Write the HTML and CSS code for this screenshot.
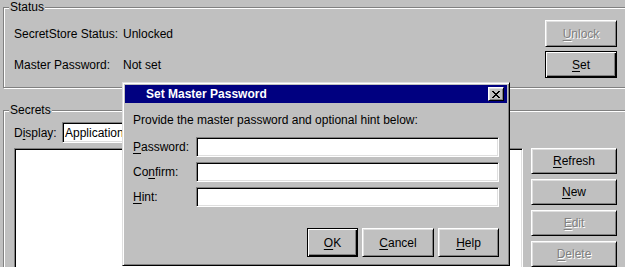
FILE: index.html
```html
<!DOCTYPE html>
<html lang="en">
  <head>
    <meta charset="UTF-8" />
    <meta name="viewport" content="width=device-width, initial-scale=1.0" />
    <link rel="stylesheet" href="styles.css">
  </head>
  <body>
    <div class="window">
      <fieldset class="group status">
        <legend>Status</legend>
        <div class="status-grid">
          <span>SecretStore Status:</span>
          <span>Unlocked</span>
          <button class="btn" disabled><u>U</u>nlock</button>
          <span>Master Password:</span>
          <span>Not set</span>
          <button class="btn default"><u>S</u>et</button>
        </div>
      </fieldset>
      <fieldset class="group secrets">
        <legend>Secrets</legend>
        <div class="secrets-grid">
          <div class="display-row">
            <span>D<u>i</u>splay:</span>
            <div class="combo">Application</div>
          </div>
          <div class="list"></div>
          <div class="side-buttons">
            <button class="btn"><u>R</u>efresh</button>
            <button class="btn"><u>N</u>ew</button>
            <button class="btn" disabled><u>E</u>dit</button>
            <button class="btn" disabled><u>D</u>elete</button>
          </div>
        </div>
      </fieldset>
    </div>

    <div class="dialog">
      <div class="title-bar">
        <span class="title">Set Master Password</span>
        <button class="close-btn">
          <svg width="8" height="7" viewBox="0 0 8 7">
            <path d="M0 0h2v1h1v1h2V1h1V0h2v1H7v1H6v1H5v1h1v1h1v1h1v1H6V6H5V5H3v1H2v1H0V6h1V5h1V4h1V3H2V2H1V1H0z" fill="#000"/>
          </svg>
        </button>
      </div>
      <div class="dialog-body">
        <div class="message">Provide the master password and optional hint below:</div>
        <div class="form-grid">
          <span><u>P</u>assword:</span>
          <div class="field"></div>
          <span>Co<u>n</u>firm:</span>
          <div class="field"></div>
          <span><u>H</u>int:</span>
          <div class="field"></div>
        </div>
        <div class="dialog-buttons">
          <button class="btn default ok"><u>O</u>K</button>
          <button class="btn cancel"><u>C</u>ancel</button>
          <button class="btn help"><u>H</u>elp</button>
        </div>
      </div>
    </div>
  </body>
</html>
```

FILE: styles.css
```css
body {
  margin: 0;
  padding: 0;
  background-color: #c0c0c0;
  font-family: "Liberation Sans", Arial, sans-serif;
  font-size: 12px;
  line-height: 14px;
  color: #000;
  overflow: hidden;
  width: 625px;
  height: 267px;
}
u {
  text-decoration: underline;
  text-underline-offset: 2px;
}
.window {
  width: 660px;
  position: relative;
}
.group {
  margin: 0 0 0 3px;
  border: 1px solid #808080;
  box-shadow: 1px 1px 0 #fff, inset 1px 1px 0 #fff;
  min-width: 0;
}
.group legend {
  margin-left: -5px;
  padding: 0 1px;
  line-height: 14px;
  background-color: #c0c0c0;
}
.status {
  padding: 6px 30px 9px 10px;
}
.status-grid {
  display: grid;
  width: 603px;
  grid-template-columns: 109px 1fr 72px;
  grid-template-rows: 27px 27px;
  row-gap: 4px;
  align-items: center;
}
.secrets {
  margin-top: 15px;
  padding: 5px 30px 0 10px;
}
.secrets-grid {
  display: grid;
  width: 603px;
  grid-template-columns: 509px 86px;
  column-gap: 8px;
  grid-template-rows: 21px 130px;
  row-gap: 5px;
}
.display-row {
  grid-column: 1 / 3;
  display: flex;
  align-items: center;
}
.display-row span {
  width: 48px;
}
.combo {
  width: 360px;
  height: 21px;
  box-sizing: border-box;
  padding: 3px 2px;
  background-color: #fff;
  border: 1px solid;
  border-color: #808080 #fff #fff #808080;
  box-shadow: inset 1px 1px 0 #000, inset -1px -1px 0 #dfdfdf;
}
.list {
  background-color: #fff;
  border: 1px solid;
  border-color: #808080 #fff #fff #808080;
  box-shadow: inset 1px 1px 0 #000, inset -1px -1px 0 #dfdfdf;
}
.side-buttons {
  display: flex;
  flex-direction: column;
  gap: 5px;
}
.side-buttons .btn {
  height: 26px;
}
.btn {
  font-family: inherit;
  font-size: 12px;
  line-height: 14px;
  color: #000;
  background-color: #c0c0c0;
  border: 1px solid;
  border-color: #fff #000 #000 #fff;
  box-shadow: inset 1px 1px 0 #dfdfdf, inset -1px -1px 0 #808080;
  padding: 0;
  margin: 0;
  height: 27px;
}
.btn:disabled {
  color: #808080;
  text-shadow: 1px 1px 0 #fff;
}
.btn.default {
  border-color: #000;
  box-shadow: inset 1px 1px 0 #fff, inset -1px -1px 0 #000, inset -2px -2px 0 #808080;
}

.dialog {
  position: absolute;
  left: 122px;
  top: 82px;
  width: 388px;
  height: 184px;
  box-sizing: border-box;
  background-color: #c0c0c0;
  border: 1px solid;
  border-color: #dfdfdf #000 #000 #dfdfdf;
  box-shadow: inset 1px 1px 0 #fff, inset -1px -1px 0 #808080;
  padding: 2px;
}
.title-bar {
  height: 18px;
  background-color: #000080;
  display: flex;
  align-items: center;
  justify-content: space-between;
  padding: 0 3px 0 21px;
}
.title {
  color: #fff;
  font-weight: bold;
}
.close-btn {
  width: 16px;
  height: 14px;
  padding: 0;
  background-color: #c0c0c0;
  border: 1px solid;
  border-color: #fff #000 #000 #fff;
  box-shadow: inset 1px 1px 0 #dfdfdf, inset -1px -1px 0 #808080;
  display: flex;
  align-items: center;
  justify-content: center;
}
.dialog-body {
  padding: 10px 8px 0 8px;
}
.form-grid {
  margin-top: 10px;
  display: grid;
  grid-template-columns: 63px 1fr;
  grid-auto-rows: 20px;
  row-gap: 5px;
  align-items: center;
}
.field {
  height: 20px;
  box-sizing: border-box;
  background-color: #fff;
  border: 1px solid;
  border-color: #808080 #fff #fff #808080;
  box-shadow: inset 1px 1px 0 #000, inset -1px -1px 0 #dfdfdf;
}
.dialog-buttons {
  margin-top: 21px;
  display: flex;
  justify-content: flex-end;
  gap: 4px;
}
.dialog-buttons .btn {
  height: 29px;
}
.ok {
  width: 51px;
}
.cancel {
  width: 72px;
}
.help {
  width: 61px;
}
```
